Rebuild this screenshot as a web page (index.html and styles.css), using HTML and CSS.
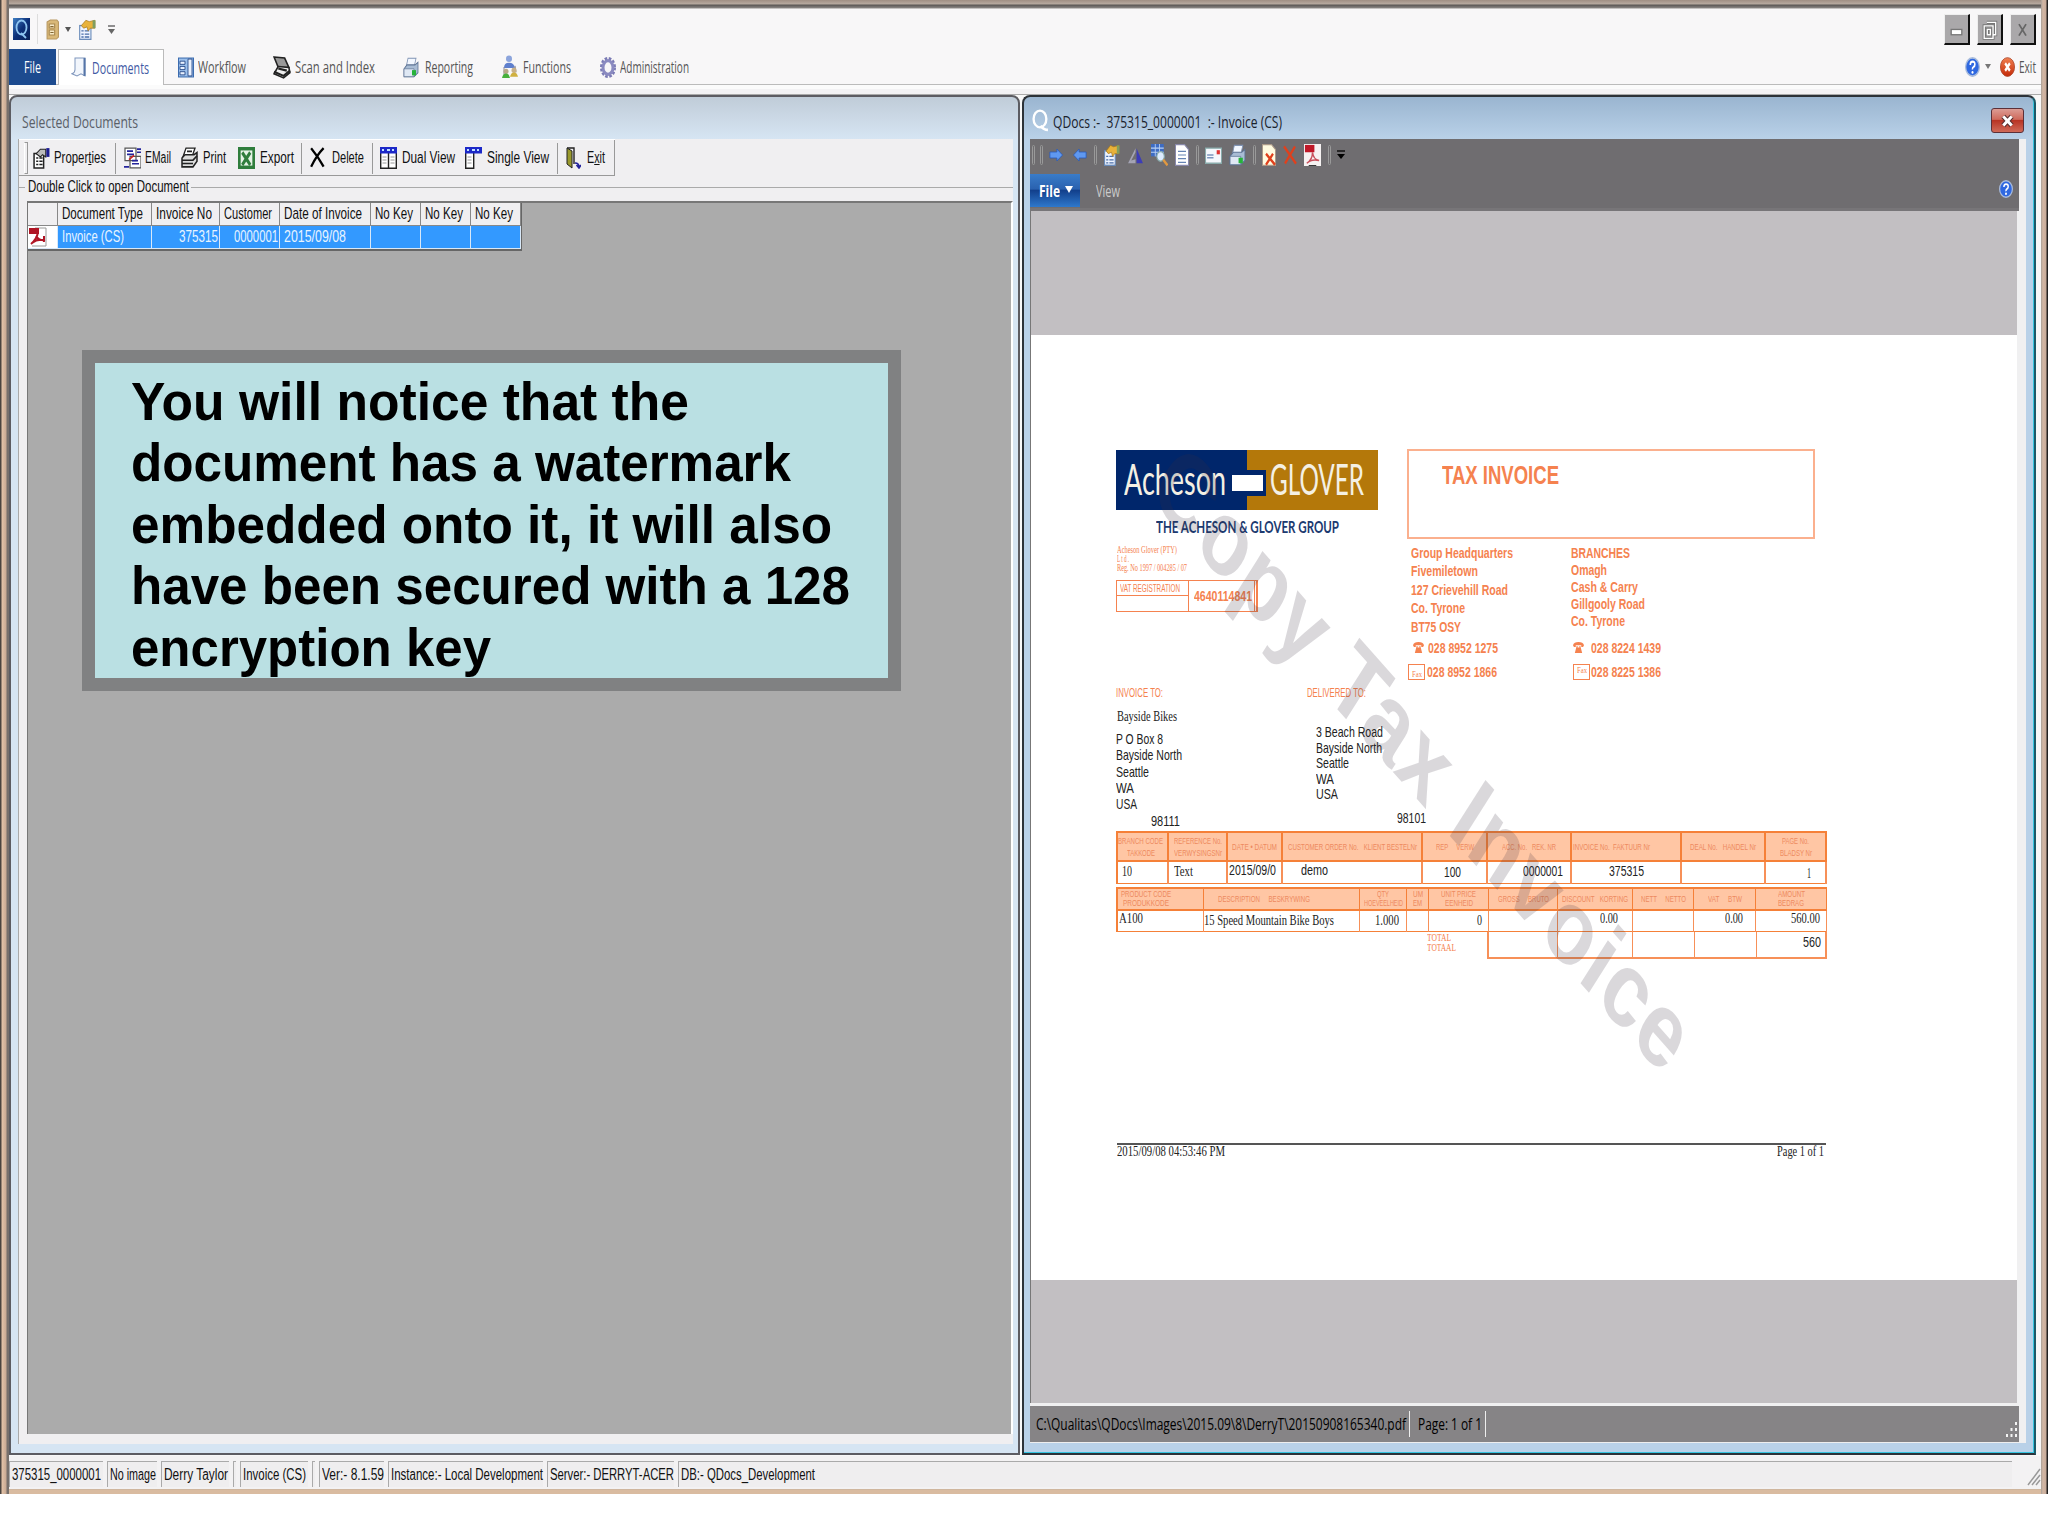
FILE: index.html
```html
<!DOCTYPE html>
<html>
	<head>
		<meta charset="utf-8">
		<title>QDocs</title>
		<link rel="stylesheet" href="styles.css">
	</head>
	<body>

		<!-- shared icons -->
		<svg class="defs" width="0" height="0">
			<defs>
				<linearGradient id="gNavy" x1="0" y1="0" x2="1" y2="1"><stop offset="0" stop-color="#3f7fc4"/><stop offset=".5" stop-color="#0c2f78"/><stop offset="1" stop-color="#0a2056"/></linearGradient>
				<linearGradient id="gRed" x1="0" y1="0" x2="0" y2="1"><stop offset="0" stop-color="#f08050"/><stop offset="1" stop-color="#c42a08"/></linearGradient>
			</defs>
			<symbol id="props" viewBox="0 0 16 16" preserveAspectRatio="none"><rect x="1.5" y="5" width="10" height="10.5" fill="#eef4ff" stroke="#6a8cba"/><path d="M3 9h2M6 9h4M3 11.5h2M6 11.5h4M3 13.7h2M6 13.7h4" stroke="#4a6ea8"/><path d="M3 5l4-4 3 1 5-1v6l-4 0-2 2-1-3-3 1z" fill="#e8b23a" stroke="#a8781c" stroke-width=".6"/><rect x="13" y="1" width="2.5" height="6" fill="#7f9e60"/></symbol>
			<symbol id="help" viewBox="0 0 16 16" preserveAspectRatio="none"><circle cx="8" cy="8" r="7.3" fill="#2f68e0" stroke="#a9bcdc" stroke-width="1.4"/><path d="M5.6 6.3q0-2.6 2.5-2.6t2.4 2.2q0 1.3-1.4 2T8 10" fill="none" stroke="#fff" stroke-width="1.7"/><circle cx="8" cy="12.3" r="1.1" fill="#fff"/></symbol>
			<symbol id="printer" viewBox="0 0 16 16" preserveAspectRatio="none"><path d="M5 1h8l-2 7H3z" fill="#f2f7ff" stroke="#8094b4" stroke-width=".8"/><path d="M1 9l3-3h8l3-2v8l-4 3H1z" fill="#a9bcd4" stroke="#5d7394" stroke-width=".8"/><path d="M1 9h10v6H1z" fill="#dfe8f4" stroke="#5d7394" stroke-width=".6"/><rect x="9" y="10" width="4" height="4" fill="#26b33a"/></symbol>
			<symbol id="excel" viewBox="0 0 16 16" preserveAspectRatio="none"><rect width="16" height="16" fill="#2f7d3c"/><rect x="2.5" y="2.5" width="11" height="11" fill="#e6f3e6"/><path d="M4 4l7.5 9M11.5 4L4 13" stroke="#2f7d3c" stroke-width="2.6"/></symbol>
			<symbol id="arrow" viewBox="0 0 16 16" preserveAspectRatio="none"><path d="M1 4h8V0l6.500 8L9 16v-4H1z" fill="#5f98f0" stroke="#2a5ab8"/></symbol>
			<symbol id="phone" viewBox="0 0 12 12" preserveAspectRatio="none"><path d="M0 4Q1 1 6 1t6 3l-1 1.5H9V4H3v1.5H1z"/><path d="M4 4.500h1V6h2V4.500h1L10 11H2z"/></symbol>
		</svg>

		<div class="app">
			<div class="quick">
				<svg class="qlogo" viewBox="0 0 17 22" preserveAspectRatio="none"><rect width="17" height="22" fill="url(#gNavy)"/><ellipse cx="8.500" cy="9.500" rx="5" ry="7" fill="none" stroke="#8ec4f0" stroke-width="1.800"/><path d="M8 15l5 5" stroke="#8ec4f0" stroke-width="1.800"/></svg>
				<i class="vline"></i>
				<svg class="cabinet" viewBox="0 0 12 21" preserveAspectRatio="none"><path d="M1 3l3-2h6l1.500 2v15l-2 2H1z" fill="#d9b878" stroke="#b89860"/><path d="M3 5h5v4H3zM3 11h5v5H3z" fill="#f8ebc8" stroke="#a88850"/><path d="M4 7.500h3M4 13.500h3" stroke="#806430"/></svg>
				<svg class="tiny" viewBox="0 0 6 5"><path d="M0 0h6L3 5z" fill="#555"/></svg>
				<svg class="prop" viewBox="0 0 16 16" preserveAspectRatio="none"><use href="#props"/></svg>
				<svg class="more" viewBox="0 0 7 9" preserveAspectRatio="none"><path d="M0 1h7" stroke="#555" stroke-width="1.300"/><path d="M0 4h7L3.500 9z" fill="#666"/></svg>
				<div class="winbtns">
					<b><svg viewBox="0 0 26 31"><rect x="7" y="16" width="12" height="6" fill="#fff" stroke="#777" stroke-width="1.500"/></svg></b>
					<b><svg viewBox="0 0 26 31"><path d="M10 8h10v14h-3M7 12h10v14H7zM10.500 16h3.500v6h-3.500z" fill="none" stroke="#777" stroke-width="3.500"/><path d="M10 8h10v14h-3M7 12h10v14H7zM10.500 16h3.500v6h-3.500z" fill="none" stroke="#fff" stroke-width="1.500"/></svg></b>
					<b><svg viewBox="0 0 26 31"><path d="M9 10l8 13M17 10L9 23" stroke="#666" stroke-width="2"/></svg></b>
				</div>
			</div>

			<div class="tabs">
				<a class="file"><span class="fit" data-w="17">File</span></a>
				<a class="on">
					<svg viewBox="0 0 16 20" preserveAspectRatio="none"><path d="M4 1h10v17l-4-2-4 2-5-2q3-1 3-4z" fill="#f2f6fc" stroke="#8097bd"/><path d="M13.500 1v17" stroke="#5575a8" stroke-width="2"/></svg>
					<span class="fit" data-w="57">Documents</span></a>
				<a>
					<svg viewBox="0 0 16 20" preserveAspectRatio="none"><rect x=".5" y="1" width="15" height="18" fill="#9cc0ec" stroke="#3c6cb0"/><path d="M2 4h5v3H2zM2 9h5v3H2zM2 14h5v3H2zM10 2h4v16h-4z" fill="#eaf2ff" stroke="#1c3f80" stroke-width=".8"/></svg>
					<span class="fit" data-w="48">Workflow</span></a>
				<a>
					<svg viewBox="0 0 17 22" preserveAspectRatio="none"><path d="M1 1l10 1 4 9H5z" fill="#999" stroke="#222" stroke-width="1.500"/><path d="M5 10l10 1 1 5-6 5-9-4z" fill="#eee" stroke="#222" stroke-width="1.500"/><path d="M1 15l9 4 6-5M5 12l8 2" stroke="#222" stroke-width="2" fill="none"/></svg>
					<span class="fit" data-w="80">Scan and Index</span></a>
				<a>
					<svg viewBox="0 0 16 16" preserveAspectRatio="none"><use href="#printer"/></svg>
					<span class="fit" data-w="48">Reporting</span></a>
				<a>
					<svg viewBox="0 0 16 22" preserveAspectRatio="none"><ellipse cx="7" cy="3.500" rx="3" ry="3" fill="#8ca4dc"/><path d="M2 12q0-5 5-5t6 5z" fill="#5f7fcd"/><path d="M2 11v7M13 10l1 6" stroke="#889"/><circle cx="4" cy="15" r="2.500" fill="#b8a888"/><path d="M0 21q1-4 4-4t4 4z" fill="#48b03c"/><circle cx="12" cy="14" r="2.500" fill="#c8b088"/><path d="M8 20q1-4 4-4t4 4z" fill="#d0b040"/></svg>
					<span class="fit" data-w="48">Functions</span></a>
				<a>
					<svg viewBox="0 0 16 20" preserveAspectRatio="none"><ellipse cx="8" cy="10" rx="6.500" ry="8.500" fill="none" stroke="#7a7ab4" stroke-width="3" stroke-dasharray="2.500 1.500"/><ellipse cx="8" cy="10" rx="5" ry="6.500" fill="none" stroke="#8a8ac0" stroke-width="3"/></svg>
					<span class="fit" data-w="69">Administration</span></a>
				<div class="right">
					<svg class="ball" viewBox="0 0 16 16" preserveAspectRatio="none"><use href="#help"/></svg>
					<svg class="tiny" viewBox="0 0 6 5"><path d="M0 0h6L3 5z" fill="#777"/></svg>
					<svg class="ball" viewBox="0 0 16 16" preserveAspectRatio="none"><circle cx="8" cy="8" r="7.500" fill="url(#gRed)" stroke="#b04a30" stroke-width=".8"/><path d="M5.500 5l5 6M10.500 5l-5 6" stroke="#fff" stroke-width="2.200"/></svg>
					<span class="fit" data-w="17">Exit</span>
				</div>
			</div>
			<div class="strip"></div>

			<div class="mdi">
				<div class="win docs">
					<div class="title"><span class="fit" data-w="116">Selected Documents</span></div>
					<div class="panel">
						<div class="toolbar">
							<i class="grip"></i>
							<a><svg viewBox="0 0 16 20" preserveAspectRatio="none"><path d="M1 6h9v13H1z" fill="#fff" stroke="#222" stroke-width="1.400"/><path d="M3 10h2M6 10h3M3 13h2M6 13h3M3 16h2M6 16h3" stroke="#222" stroke-width="1.400"/><path d="M3 6l4-4h5v7l-3-2-2 2z" fill="#bbb" stroke="#222"/><path d="M14 1v8" stroke="#1c1c90" stroke-width="3"/></svg>
							<span class="fit" data-w="52">Proper<u>t</u>ies</span></a>
							<a class="sep"><svg viewBox="0 0 17 21" preserveAspectRatio="none"><path d="M1 1h11v12H1zM6 9h11v11H6z" fill="#fff" stroke="#555" stroke-width="1.200"/><path d="M3 4h6M3 7h7M8 13h6M8 16h7M13 2h4M13 5h4M0 19h5" stroke="#24249c" stroke-width="1.600"/><path d="M5 12l5-4" stroke="#c22" stroke-width="1.600"/></svg>
							<span class="fit" data-w="26">EMail</span></a>
							<a><svg viewBox="0 0 17 20" preserveAspectRatio="none"><path d="M5 1h9l-3 8H2z" fill="#fff" stroke="#222" stroke-width="1.300"/><path d="M1 10l3-3h9l3-2v8l-4 5H1z" fill="#ddd" stroke="#222" stroke-width="1.500"/><path d="M1 12h11l4-4M1 15h11M6 4h5" stroke="#222" stroke-width="1.500" fill="none"/></svg>
							<span class="fit" data-w="23">Print</span></a>
							<a><svg viewBox="0 0 16 16" preserveAspectRatio="none"><use href="#excel"/></svg>
							<span class="fit" data-w="34">Export</span></a>
							<a class="sep"><svg viewBox="0 0 15 19" preserveAspectRatio="none"><path d="M1 1q6 7 11 16M12 1Q6 7 1 17" stroke="#000" stroke-width="2" fill="none"/></svg>
							<span class="fit" data-w="32">Delete</span></a>
							<a class="sep"><svg viewBox="0 0 17 22" preserveAspectRatio="none"><path d="M.7.7h15.600v20.600H.7zM8.500 6v15" fill="#fff" stroke="#222" stroke-width="1.400"/><rect width="17" height="6.500" fill="#1c28c8"/><path d="M2 3h2M7 3h3M12 3h2" stroke="#bfe0ff" stroke-width="2"/><path d="M2.500 10h4M2.500 13h4M2.500 16h4M10.500 10h4M10.500 13h4M10.500 16h4" stroke="#999"/></svg>
							<span class="fit" data-w="53">Dual View</span></a>
							<a><svg viewBox="0 0 17 22" preserveAspectRatio="none"><path d="M.7.7h8v20.600h-8z" fill="#fff" stroke="#222" stroke-width="1.400"/><rect width="17" height="6.500" fill="#1c28c8"/><path d="M2 3h2M7 3h3M12 3h2" stroke="#bfe0ff" stroke-width="2"/><path d="M2.500 10h4M2.500 13h4M2.500 16h4" stroke="#999"/></svg>
							<span class="fit" data-w="62">Single View</span></a>
							<a class="sep"><svg viewBox="0 0 15 22" preserveAspectRatio="none"><path d="M1 1h7v16" fill="none" stroke="#222" stroke-width="1.400"/><path d="M1 1l5 3v17l-5-4z" fill="#99992c" stroke="#222"/><path d="M9 16q4 0 4 4M10.500 18l2.500 3 2-3" stroke="#22229c" stroke-width="1.600" fill="none"/></svg>
							<span class="fit" data-w="18">E<u>x</u>it</span></a>
						</div>
						<div class="legend"><span class="fit" data-w="161">Double Click to open Document</span></div>
						<div class="list">
							<div class="grid">
								<b></b><b><span class="fit" data-w="81">Document Type</span></b><b><span class="fit" data-w="56">Invoice No</span></b><b><span class="fit" data-w="48">Customer</span></b><b><span class="fit" data-w="78">Date of Invoice</span></b><b><span class="fit" data-w="38">No Key</span></b><b><span class="fit" data-w="38">No Key</span></b><b><span class="fit" data-w="38">No Key</span></b>
								<i class="pdf"><svg viewBox="0 0 18 20" preserveAspectRatio="none"><path d="M6 1h11v18H3" fill="#fff" stroke="#999"/><rect y="1" width="10" height="6" fill="#b01525"/><path d="M2 17Q8 12 9 5M7 9q3 5 9 4M3 16q5-4 11-3M15 9v6" stroke="#b01525" stroke-width="2" fill="none"/></svg></i>
								<i><span class="fit" data-w="62">Invoice (CS)</span></i><i class="r"><span class="fit" data-w="39">375315</span></i><i class="r"><span class="fit" data-w="44">0000001</span></i><i><span class="fit" data-w="62">2015/09/08</span></i><i></i><i></i><i></i>
							</div>
						</div>
					</div>
				</div>

				<div class="win viewer">
					<div class="title">
						<svg class="q" viewBox="0 0 16 22" preserveAspectRatio="none"><ellipse cx="7.500" cy="9.500" rx="6" ry="8" fill="none" stroke="#fff" stroke-width="2.200"/><path d="M8 16q3 4 7 4" fill="none" stroke="#fff" stroke-width="2.500"/></svg>
						<span class="fit" data-w="229">QDocs :-&nbsp; 375315_0000001&nbsp; :- Invoice (CS)</span>
						<svg class="close" viewBox="0 0 33 25" preserveAspectRatio="none"><path d="M12 8l9 10M21 8l-9 10" stroke="#5a3030" stroke-width="5.500"/><path d="M12 8l9 10M21 8l-9 10" stroke="#fff" stroke-width="3.200"/></svg>
					</div>
					<div class="body">
						<div class="vbar">
							<i></i><i></i>
							<svg viewBox="0 0 16 16" preserveAspectRatio="none" class="s"><use href="#arrow"/></svg>
							<svg viewBox="0 0 16 16" preserveAspectRatio="none" class="s flip"><use href="#arrow"/></svg>
							<i></i>
							<svg viewBox="0 0 16 16" preserveAspectRatio="none"><use href="#props"/></svg>
							<svg viewBox="0 0 16 16" preserveAspectRatio="none"><path d="M1 14L8 3v3L4 12l4-1v3z" fill="#a4a4b4"/><path d="M9 14V3l6 11z" fill="#3c3cb8"/></svg>
							<svg viewBox="0 0 16 16" preserveAspectRatio="none"><path d="M0 0h12v9H0z" fill="#3d6cc4"/><path d="M0 3h12M0 6h12M4 0v9M8 0v9" stroke="#b8d0f4" stroke-width=".8"/><circle cx="9" cy="9" r="3.500" fill="#dcebff" stroke="#8aa" /><path d="M11.500 11.500l4 4" stroke="#e09840" stroke-width="2"/></svg>
							<svg class="n" viewBox="0 0 14 18" preserveAspectRatio="none"><path d="M.5.5h9l4 4v13H.5z" fill="#fff" stroke="#88a"/><path d="M3 6h8M3 9h8M3 12h8M3 15h8" stroke="#6684b4"/></svg>
							<i></i>
							<svg viewBox="0 0 16 16" preserveAspectRatio="none"><path d="M.5 3h15v11H.5z" fill="#f4f7fc" stroke="#8aa"/><path d="M2 8h6M2 10h6" stroke="#7a94bc"/><rect x="11" y="4.500" width="3" height="3" fill="#d33"/></svg>
							<svg viewBox="0 0 16 16" preserveAspectRatio="none"><use href="#printer"/></svg>
							<i></i>
							<svg class="n" viewBox="0 0 14 18" preserveAspectRatio="none"><path d="M.5.5h9l4 4v13H.5z" fill="#fffbe0" stroke="#a98"/><path d="M4 8l9 9M11 8L4 17" stroke="#e0401c" stroke-width="2.200"/></svg>
							<svg class="n" viewBox="0 0 14 18" preserveAspectRatio="none"><path d="M1 2l12 14M12 2L2 16" stroke="#e0401c" stroke-width="2.200"/></svg>
							<svg viewBox="0 0 18 24" preserveAspectRatio="none"><rect width="18" height="24" fill="#f6f2f2"/><rect x="1" y="1" width="10" height="8" fill="#c01828"/><path d="M3 21Q9 17 9 9q1 8 7 9-8-2-13 3z" stroke="#c8505c" stroke-width="1.500" fill="none"/><path d="M5 23.500h8" stroke="#222"/></svg>
							<i></i>
							<svg class="more" viewBox="0 0 7 9" preserveAspectRatio="none"><path d="M0 1h7" stroke="#000" stroke-width="1.300"/><path d="M0 4h7L3.500 9z"/></svg>
						</div>
						<div class="vtabs">
							<a class="vfile"><span class="fit" data-w="21">File</span><svg viewBox="0 0 8 7" preserveAspectRatio="none"><path d="M0 0h8L4 7z" fill="#fff"/></svg></a>
							<a><span class="fit" data-w="24">View</span></a>
							<svg class="ball" viewBox="0 0 16 16" preserveAspectRatio="none"><use href="#help"/></svg>
						</div>

						<div class="canvas">
							<div class="sheet">
								<div class="head">
									<div class="company">
										<div class="brand">
											<span class="fit" data-w="102">Acheson</span><em></em><span class="fit" data-w="94">GLOVER</span>
										</div>
										<div class="group"><span class="fit" data-w="183">THE ACHESON &amp; GLOVER GROUP</span></div>
										<div class="reg"><span class="fit" data-w="60">Acheson Glover (PTY)</span><br><span class="fit" data-w="12">L t d .</span><br><span class="fit" data-w="70">Reg. No 1997 / 004285 / 07</span></div>
										<div class="vat"><div><span class="fit" data-w="60">VAT REGISTRATION</span></div><b><span class="fit" data-w="58">4640114841</span></b></div>
									</div>
									<div class="office">
										<div class="taxbox"><span class="fit" data-w="117">TAX INVOICE</span></div>
										<div class="addr">
											<div class="hq">
												<span class="fit" data-w="102">Group Headquarters</span><span class="fit" data-w="67">Fivemiletown</span><span class="fit" data-w="97">127 Crievehill Road</span><span class="fit" data-w="54">Co. Tyrone</span><span class="fit" data-w="50">BT75 OSY</span>
											</div>
											<div class="br">
												<span class="fit" data-w="59">BRANCHES</span><span class="fit" data-w="36">Omagh</span><span class="fit" data-w="67">Cash &amp; Carry</span><span class="fit" data-w="74">Gillgooly Road</span><span class="fit" data-w="54">Co. Tyrone</span>
											</div>
											<div class="tel"><svg><use href="#phone"/></svg><span class="fit" data-w="70">028 8952 1275</span></div>
											<div class="tel"><svg><use href="#phone"/></svg><span class="fit" data-w="70">028 8224 1439</span></div>
											<div class="fax"><i><span class="fit" data-w="10">Fax</span></i><span class="fit" data-w="70">028 8952 1866</span></div>
											<div class="fax up"><i><span class="fit" data-w="10">Fax</span></i><span class="fit" data-w="70">028 8225 1386</span></div>
										</div>
									</div>
								</div>

								<div class="parties">
									<div class="to">
										<label><span class="fit" data-w="47">INVOICE TO:</span></label>
										<p class="name"><span class="fit" data-w="60">Bayside Bikes</span></p>
										<p><span class="fit" data-w="47">P O Box 8</span></p><p><span class="fit" data-w="66">Bayside North</span></p><p><span class="fit" data-w="33">Seattle</span></p><p><span class="fit" data-w="18">WA</span></p><p><span class="fit" data-w="21">USA</span></p>
										<p class="zip"><span class="fit" data-w="29">98111</span></p>
									</div>
									<div class="del">
										<label><span class="fit" data-w="59">DELIVERED TO:</span></label>
										<p><span class="fit" data-w="67">3 Beach Road</span></p><p><span class="fit" data-w="66">Bayside North</span></p><p><span class="fit" data-w="33">Seattle</span></p><p><span class="fit" data-w="18">WA</span></p><p><span class="fit" data-w="22">USA</span></p>
										<p class="zip"><span class="fit" data-w="29">98101</span></p>
									</div>
								</div>

								<div class="tbl t1">
									<b><span class="fit" data-w="45">BRANCH CODE</span><span class="fit" data-w="28">TAKKODE</span></b>
									<b><span class="fit" data-w="48">REFERENCE No.</span><span class="fit" data-w="48">VERWYSINGSNr</span></b>
									<b><span class="fit" data-w="45">DATE • DATUM</span></b>
									<b><span class="fit" data-w="129">CUSTOMER ORDER No.&nbsp;&nbsp; KLIENT BESTELNr</span></b>
									<b><span class="fit" data-w="38">REP &nbsp; &nbsp; VERW</span></b>
									<b><span class="fit" data-w="54">ACC. No. &nbsp; REK. NR</span></b>
									<b><span class="fit" data-w="77">INVOICE No. &nbsp;FAKTUUR Nr</span></b>
									<b><span class="fit" data-w="66">DEAL No. &nbsp; HANDEL Nr</span></b>
									<b><span class="fit" data-w="27">PAGE No.</span><span class="fit" data-w="32">BLADSY Nr</span></b>
									<i><span class="fit" data-w="10">10</span></i>
									<i><span class="fit" data-w="19">Text</span></i>
									<i class="sans"><span class="fit" data-w="47">2015/09/0</span></i>
									<i class="sans"><span class="fit" data-w="27">demo</span></i>
									<i class="sans"><span class="fit" data-w="17">100</span></i>
									<i class="sans"><span class="fit" data-w="40">0000001</span></i>
									<i class="sans"><span class="fit" data-w="35">375315</span></i>
									<i></i>
									<i><span class="fit" data-w="4">1</span></i>
								</div>
								<div class="tbl t2">
									<b><span class="fit" data-w="50">PRODUCT CODE</span><span class="fit" data-w="46">PRODUKKODE</span></b>
									<b><span class="fit" data-w="92">DESCRIPTION &nbsp; &nbsp; BESKRYWING</span></b>
									<b><span class="fit" data-w="12">QTY</span><span class="fit" data-w="39">HOEVEELHEID</span></b>
									<b><span class="fit" data-w="10">UM</span><span class="fit" data-w="9">EM</span></b>
									<b><span class="fit" data-w="35">UNIT PRICE</span><span class="fit" data-w="28">EENHEID</span></b>
									<b><span class="fit" data-w="51">GROSS &nbsp; &nbsp; BRUTO</span></b>
									<b><span class="fit" data-w="66">DISCOUNT &nbsp; KORTING</span></b>
									<b><span class="fit" data-w="45">NETT &nbsp; &nbsp; NETTO</span></b>
									<b><span class="fit" data-w="34">VAT &nbsp; &nbsp; BTW</span></b>
									<b><span class="fit" data-w="27">AMOUNT</span><span class="fit" data-w="26">BEDRAG</span></b>
									<i><span class="fit" data-w="24">A100</span></i>
									<i><span class="fit" data-w="130">15 Speed Mountain Bike Boys</span></i>
									<i><span class="fit" data-w="24">1.000</span></i>
									<i></i>
									<i><span class="fit" data-w="5">0</span></i>
									<i></i>
									<i><span class="fit" data-w="18">0.00</span></i>
									<i></i>
									<i><span class="fit" data-w="18">0.00</span></i>
									<i><span class="fit" data-w="29">560.00</span></i>
								</div>
								<div class="totals">
									<div class="tot"><span class="fit" data-w="24">TOTAL</span><br><span class="fit" data-w="29">TOTAAL</span></div>
									<i></i><i></i><i></i><i></i><i class="sans"><span class="fit" data-w="18">560</span></i>
								</div>

								<div class="foot"><span class="fit" data-w="108">2015/09/08 04:53:46 PM</span><span class="fit" data-w="47">Page 1 of 1</span></div>

								<svg class="watermark" viewBox="0 0 986 945">
									<text transform="translate(116 160) scale(.75 1) rotate(40.2)">Copy Tax Invoice</text>
								</svg>
							</div>
						</div>

						<div class="vstatus">
							<span class="fit" data-w="370">C:\Qualitas\QDocs\Images\2015.09\8\DerryT\20150908165340.pdf</span><i></i><span class="fit" data-w="64">Page: 1 of 1</span><i></i>
							<svg viewBox="0 0 12 16"><path d="M9 0h2v3H9zM9 6h2v3H9zM9 12h2v3H9zM4.500 6h2v3h-2zM4.500 12h2v3h-2zM0 12h2v3H0z" fill="#f4f4f4"/></svg>
						</div>
					</div>
				</div>
			</div>

			<div class="status">
				<span><span class="fit" data-w="89">375315_0000001</span></span>
				<span><span class="fit" data-w="46">No image</span></span>
				<span><span class="fit" data-w="64">Derry Taylor</span></span>
				<span></span>
				<span><span class="fit" data-w="63">Invoice (CS)</span></span>
				<span></span>
				<span><span class="fit" data-w="62">Ver:- 8.1.59</span></span>
				<span><span class="fit" data-w="152">Instance:- Local Development</span></span>
				<span><span class="fit" data-w="124">Server:- DERRYT-ACER</span></span>
				<span><span class="fit" data-w="134">DB:- QDocs_Development</span></span>
				<svg viewBox="0 0 14 20" preserveAspectRatio="none"><path d="M1 18L13 2M5 18l8-10M9 18l4-5" stroke="#999" stroke-width="1.500"/></svg>
			</div>
		</div>

		<div class="callout">
			<span class="fit" data-w="558">You will notice that the</span>
			<span class="fit" data-w="660">document has a watermark</span>
			<span class="fit" data-w="701">embedded onto it, it will also</span>
			<span class="fit" data-w="719">have been secured with a 128</span>
			<span class="fit" data-w="360">encryption key</span>
		</div>

		<script src="fit.js"></script>
	</body>
</html>
```
FILE: styles.css
```css
* {
	box-sizing: border-box;
}
body {
	margin: 0;
	background: #fff;
	font-family: "Liberation Sans", Arial, sans-serif;
	font-size: 16px;
	color: #111;
}
i, em { font-style: normal; }
b { font-weight: normal; }
svg { display: block; flex: none; }
.defs { position: absolute; }
.fit {
	display: inline-block;
	white-space: pre;
	transform-origin: 0 50%;
	flex: none;
}

.app {
	width: 2048px;
	height: 1494px;
	padding: 9px 7px 5px 9px;
	display: flex;
	flex-direction: column;
	background: linear-gradient(90deg, #4a4440 0, #4a4440 1px, #e3c3a8 2px, #c9aa94 6px, #77706c 7px, #77706c 9px, transparent 9px, transparent 2041px, #a8a098 2041px, #d3b7a4 2043px, #c7ab9a 2046px, #222 2047px),
		linear-gradient(#a08f84 0, #b7aaa0 4px, #5a5654 5px, #8a8684 8px, #fff 9px, #fff 1488px, #b0a898 1488px, #d9bba0 1490px);
}

/* quick access + ribbon */
.quick {
	height: 40px;
	flex: none;
	display: flex;
	align-items: center;
	padding: 0 0 0 4px;
	background: #f8f7f8;
}
.tiny { width: 6px; height: 5px; }
.qlogo { width: 17px; height: 22px; }
.vline { width: 1px; height: 30px; background: #ddd; margin: 0 8px 0 7px; }
.cabinet { width: 13px; height: 21px; margin-right: 6px; }
.prop { width: 18px; height: 21px; margin: 0 12px 0 7px; }
.quick .more { width: 7px; height: 9px; }
.winbtns {
	display: flex;
	gap: 7px;
	margin-left: auto;
	padding-right: 5px;
}
.winbtns b {
	width: 26px;
	height: 31px;
	background: #aaa8aa;
	border: 1px solid #eee;
	border-right: 2px solid #111;
	border-bottom: 2px solid #111;
}
.winbtns svg { width: 23px; height: 28px; }

.tabs {
	height: 36px;
	flex: none;
	display: flex;
	font-family: "Open Sans", sans-serif;
	color: #555;
	background: #f8f7f8;
	border-bottom: 1px solid #bbb;
}
.tabs a {
	display: flex;
	align-items: center;
	gap: 6px;
	height: 36px;
}
.tabs a svg { width: 16px; height: 21px; }
.tabs a.file {
	width: 47px;
	padding-left: 15px;
	background: #1d4b8f;
	color: #fff;
}
.tabs a.on {
	width: 106px;
	margin-left: 2px;
	padding-left: 12px;
	gap: 5px;
	background: #fff;
	border: 1px solid #bbb;
	border-bottom: 0;
	color: #3f5aa4;
}
.tabs a:nth-child(3) { padding-left: 14px; width: 109px; gap: 4px; }
.tabs a:nth-child(4) { width: 130px; gap: 4px; }
.tabs a:nth-child(4) svg { width: 18px; height: 23px; }
.tabs a:nth-child(5) { width: 99px; }
.tabs a:nth-child(6) { width: 98px; gap: 5px; }
.tabs a:nth-child(6) svg { height: 24px; }
.tabs a:nth-child(7) { gap: 4px; }
.tabs .right {
	margin-left: auto;
	padding-right: 5px;
	display: flex;
	align-items: center;
	gap: 4px;
}
.ball { width: 15px; height: 20px; }
.tabs .right .tiny { margin-right: 5px; margin-left: 1px; }
.strip {
	height: 10px;
	flex: none;
	background: #f3f2f4;
	border-top: 4px solid #fbfbfb;
	border-bottom: 1px solid #aaa;
}

/* child windows */
.mdi {
	height: 1361px;
	flex: none;
	display: flex;
	gap: 2px;
	background: #f8f8f8;
}
.win {
	height: 1360px;
	display: flex;
	flex-direction: column;
	border: 2px solid #5c5c62;
	border-radius: 8px 8px 0 0;
}
.title {
	height: 42px;
	flex: none;
	display: flex;
	align-items: center;
	font-family: "Open Sans", sans-serif;
}
.docs {
	width: 1011px;
	padding: 0 5px 9px 7px;
	background: linear-gradient(#c0ccd8 0, #d6e5f3 42px, #d6e5f3 100%);
}
.docs .title { color: #5a6068; padding: 8px 0 0 4px; }
.panel {
	flex: 1;
	background: #f0eff1;
	border-left: 1px solid #aaa;
}
.toolbar {
	width: 596px;
	height: 37px;
	display: flex;
	align-items: center;
	border-top: 1px solid #fff;
	box-shadow: inset -1px -1px #999;
}
.toolbar a { display: flex; align-items: center; gap: 5px; height: 31px; }
.toolbar svg { width: 17px; height: 22px; }
.toolbar .grip { width: 4px; height: 32px; margin: 0 5px 0 5px; border: 1px solid #999; border-left-color: #fff; }
.toolbar a.sep { border-left: 1px solid #999; }
.toolbar a:nth-child(2) { width: 82px; gap: 4px; }
.toolbar a:nth-child(3) { width: 66px; padding-left: 8px; gap: 4px; }
.toolbar a:nth-child(4) { width: 57px; }
.toolbar a:nth-child(5) { width: 63px; }
.toolbar a:nth-child(6) { width: 71px; padding-left: 8px; }
.toolbar a:nth-child(7) { width: 93px; padding-left: 7px; gap: 5px; }
.toolbar a:nth-child(8) { width: 92px; gap: 5px; }
.toolbar a:nth-child(9) { padding-left: 8px; gap: 6px; }
.toolbar a:nth-child(9) svg { width: 15px; }
.legend {
	display: flex;
	align-items: center;
	height: 22px;
	font-size: 17px;
}
.legend:before { content: ""; width: 6px; margin-right: 3px; border-top: 1px solid #aaa; }
.legend:after { content: ""; flex: 1; margin-left: 2px; border-top: 1px solid #aaa; }
.list {
	height: 1233px;
	margin: 3px 0 0 8px;
	background: #ababab;
	border: solid #777;
	border-width: 2px 0 0 1px;
	border-right: 2px solid #fff;
}
.grid {
	width: 494px;
	display: grid;
	grid-template-columns: 30px 94px 68px 60px 91px 50px 50px 50px;
	grid-template-rows: 23px 23px;
	font-size: 17px;
	border: solid #666;
	border-width: 0 1px 2px 0;
}
.grid b, .grid i {
	display: flex;
	align-items: center;
	padding: 0 2px 0 4px;
	background: #f0eff1;
	border: solid #888;
	border-width: 0 1px 1px 0;
}
.grid i { background: #3399ff; color: #e8f4ff; border-color: #d8e8f8; }
.grid i.pdf { background: #fff; padding: 0 0 0 1px; }
.pdf svg { width: 18px; height: 20px; }
.grid .r { justify-content: flex-end; padding-right: 1px; }

.viewer {
	width: 1014px;
	border-color: #2c3238;
	border-right-color: #1b5a68;
	box-shadow: inset -1px -1px #35c4e0;
	padding: 0 8px 10px 6px;
	background: linear-gradient(#9ab5d0 0, #b9d1e8 42px, #b9d1e8 100%);
}
.viewer .title { color: #1a222c; padding: 0 2px 0 2px; }
.viewer .q { width: 17px; height: 23px; margin: 4px 4px 0 0; }
.viewer .title .fit { margin-top: 7px; }
.close {
	width: 33px;
	height: 25px;
	margin: 5px 0 0 auto;
	border: 1px solid #5c3038;
	border-radius: 3px;
	background: linear-gradient(#dc9c94 0, #cf6a5c 45%, #b83424 50%, #d06a58 100%);
}
.body {
	flex: 1;
	display: flex;
	flex-direction: column;
	background: #f0f0f1;
	padding-right: 7px;
}
.vbar {
	height: 35px;
	flex: none;
	display: flex;
	align-items: center;
	background: #6f6d70;
	padding: 0 2px 4px;
	gap: 7px;
}
.vbar i { width: 3px; height: 20px; border: 1px solid #999; border-radius: 2px; margin-right: -1px; }
.vbar svg { width: 17px; height: 22px; }
.vbar i + i { margin-left: -1px; }
.vbar .n { width: 14px; }
.vbar .s { width: 14px; height: 12px; margin-right: 3px; }
.vbar .flip { transform: scaleX(-1); margin-right: 0; }
.vbar .more { width: 8px; height: 9px; }
.vtabs {
	height: 37px;
	flex: none;
	display: flex;
	background: #6f6d70;
	border-bottom: 3px solid #777578;
	font-family: "Open Sans", sans-serif;
	color: #ccc;
}
.vtabs a { display: flex; align-items: center; height: 34px; padding-left: 16px; }
.vtabs .vfile {
	width: 50px;
	height: 33px;
	padding-left: 9px;
	gap: 5px;
	color: #fff;
	font-weight: bold;
	background: linear-gradient(#3a7cc8 0, #2a62b0 45%, #12408c 50%, #2e78cc 100%);
}
.vfile svg { width: 8px; height: 7px; margin-top: -3px; }
.vtabs .ball { width: 14px; height: 18px; margin: 6px 6px 0 auto; }
.canvas {
	height: 1192px;
	flex: none;
	padding-top: 124px;
	margin-right: 2px;
	background: #c2bfc2;
	border-left: 1px solid #777;
}
.vstatus {
	height: 37px;
	display: flex;
	align-items: center;
	padding-left: 6px;
	margin-top: 3px;
	background: #868486;
	font-family: "Open Sans", sans-serif;
	color: #000;
	border-bottom: 1px solid #eee;
}
.vstatus i { width: 1px; height: 26px; background: #eee; margin: 0 8px 0 3px; }
.vstatus svg { width: 12px; height: 16px; margin: 12px 1px 0 auto; }

/* invoice */
.sheet {
	position: relative;
	width: 986px;
	height: 945px;
	padding: 114px 0 0 85px;
	background: #fff;
	color: #222;
}
.head {
	height: 237px;
	display: grid;
	grid-template-columns: 291px 408px;
	color: #f5824f;
}
.brand {
	width: 262px;
	height: 60px;
	margin-top: 1px;
	padding-left: 8px;
	display: flex;
	align-items: center;
	background: linear-gradient(90deg, #00266b 131px, #b4780a 131px);
	font-family: Lato, sans-serif;
	font-size: 42px;
	line-height: 60px;
	color: #f4f0e4;
}
.brand .fit { margin-top: -2px; }
.brand em {
	width: 37px;
	height: 26px;
	margin: 6px 4px 0 3px;
	background: #fff;
	border: 5px solid #00266b;
	border-width: 5px 3px 5px 3px;
}
.group {
	height: 30px;
	padding: 6px 0 0 40px;
	font: bold 17px/22px Lato, sans-serif;
	color: #1c3a70;
}
.reg {
	padding: 5px 0 0 1px;
	height: 40px;
	font: 10px/9px "Liberation Serif", serif;
}
.vat {
	width: 142px;
	height: 32px;
	display: grid;
	grid-template-columns: 71px 67px;
	border: 1px solid #f5824f;
	border-right-width: 2px;
	font-size: 10px;
}
.vat div { height: 15px; padding: 2px 0 0 3px; line-height: 11px; border-bottom: 1px solid #f5824f; }
.vat b { border: solid #f5824f; border-width: 0 1px; padding-left: 5px; font: bold 15px/30px "Liberation Sans", sans-serif; }
.taxbox {
	height: 90px;
	padding: 9px 0 0 33px;
	border: 2px solid #fbb08e;
	font: bold 26px/30px "Liberation Sans", sans-serif;
}
.addr {
	display: grid;
	grid-template-columns: 160px 200px;
	grid-template-rows: 91px 25px 23px;
	padding-top: 5px;
	font-weight: bold;
	font-size: 15px;
}
.hq, .br { display: flex; flex-direction: column; align-items: flex-start; padding-left: 4px; line-height: 18.4px; }
.br { line-height: 17px; }
.tel, .fax { display: flex; align-items: center; }
.tel svg { width: 11px; height: 13px; margin: 0 4px 0 6px; fill: #f5824f; }
.tel:nth-child(4) svg { margin-right: 7px; }
.fax i {
	width: 17px;
	height: 16px;
	margin: 0 2px 0 1px;
	padding: 5px 0 0 3px;
	font: 8px/9px "Liberation Serif", serif;
	border: 1px solid #f5824f;
}
.fax.up i { margin-left: 6px; padding-top: 1px; margin-right: 1px; }
.parties {
	height: 145px;
	display: grid;
	grid-template-columns: 191px 200px;
	font-size: 15px;
}
.parties label { display: block; height: 19px; padding-top: 1px; font-size: 12px; line-height: 12px; color: #f5824f; }
.parties p { margin: 0; line-height: 16.3px; height: 16.3px; }
.parties .name { font: 15px/22px "Liberation Serif", serif; height: 24px; margin-bottom: 2px; padding-left: 1px; }
.to .zip { padding: 1px 0 0 35px; }
.parties .del label { height: 38px; }
.parties .del p { line-height: 15.5px; height: 15.5px; padding-left: 9px; }
.parties .del .zip { padding: 8px 0 0 90px; }

.tbl {
	width: 711px;
	display: grid;
	border: solid #f58038;
	border-width: 2px 0 1px 2px;
	font: 15px/18px "Liberation Serif", serif;
}
.tbl b {
	display: flex;
	flex-direction: column;
	align-items: center;
	justify-content: center;
	background: #ffc6a4;
	border: solid #f58038;
	border-width: 0 2px 2px 0;
	font: 9px/11px "Liberation Sans", sans-serif;
	color: #ee8a60;
}
.tbl i { border-right: 2px solid #f79058; }
.tbl .fit, .totals .fit { vertical-align: top; }
.sans { font-family: "Liberation Sans", sans-serif; }
.t1 { grid-template: 29px 22px / 51px 59px 55px 140px 65px 84px 110px 84px 61px; height: 53px; }
.t1 i:nth-of-type(1) { padding-left: 4px; }
.t1 i:nth-of-type(2) { padding-left: 5px; }
.t1 i:nth-of-type(3) { padding-left: 1px; line-height: 16px; }
.t1 i:nth-of-type(4) { padding-left: 18px; line-height: 16px; }
.t1 i:nth-of-type(5) { padding-left: 21px; line-height: 20px; }
.t1 i:nth-of-type(6) { padding-left: 35px; }
.t1 i:nth-of-type(7) { padding-left: 37px; }
.t1 i:nth-of-type(9) { padding: 2px 0 0 41px; }
.t1 b { line-height: 12px; }
.t2 { grid-template: 22px 21px / 86px 156px 47px 22px 60px 69px 75px 61px 62px 71px; height: 45px; margin-top: 3px; }
.t2 b { line-height: 9px; border-right-width: 1px; }
.t2 i { border-right-width: 1px; text-align: right; }
.t2 b:first-child { padding-right: 30px; }
.t2 b:nth-child(2) { padding-right: 36px; }
.t1 b:first-child { padding-right: 4px; }
.t1 b:nth-of-type(7) { padding-right: 30px; }
.t2 i:nth-of-type(1) { text-align: left; padding-left: 1px; line-height: 14px; }
.t2 i:nth-of-type(2) { text-align: left; }
.t2 i:nth-of-type(3) { padding-right: 7px; }
.t2 i:nth-of-type(5) { padding-right: 6px; }
.t2 i:nth-of-type(7) { padding-right: 14px; line-height: 15px; }
.t2 i:nth-of-type(9) { padding-right: 12px; line-height: 15px; }
.t2 i:nth-of-type(10) { padding-right: 6px; line-height: 15px; }
.totals {
	width: 711px;
	height: 27px;
	display: grid;
	grid-template-columns: 371px 70px 75px 62px 62px 71px;
	font-size: 15px;
}
.totals i { border: solid #f79058; border-width: 0 0 2px 1px; text-align: right; line-height: 19px; padding-right: 4px; }
.totals i:last-child { border-right-width: 2px; }
.totals i:nth-child(2) { border-left-width: 2px; }
.tot { padding: 0 0 0 311px; font: 11px/10px "Liberation Serif", serif; color: #f5824f; }
.foot {
	width: 709px;
	margin: 184px 0 0 1px;
	padding-right: 2px;
	display: flex;
	justify-content: space-between;
	border-top: 2px solid #555;
	font: 14px/13px "Liberation Serif", serif;
}
.watermark {
	position: absolute;
	left: 0;
	top: 0;
	width: 986px;
	height: 945px;
}
.watermark text {
	font: bold 107px "Liberation Sans", sans-serif;
	letter-spacing: 2px;
	fill: rgba(60, 50, 65, .19);
}

.status {
	height: 33px;
	flex: none;
	display: grid;
	grid-template-columns: 94px 50px 68px 3px 68px 3px 65px 155px 127px 1fr 25px;
	column-gap: 4px;
	padding: 5px 0 2px 0;
	background: #f3f2f3;
}
.status > span {
	display: flex;
	align-items: center;
	min-width: 0;
	padding-left: 2px;
	background: #efeeef;
	border: solid #aaa;
	border-width: 1px 0 0 1px;
}
.status svg { width: 14px; height: 20px; align-self: end; justify-self: end; }

/* floating note over the workspace */
.callout {
	position: absolute;
	left: 82px;
	top: 350px;
	width: 819px;
	height: 341px;
	padding: 8px 0 0 36px;
	display: flex;
	flex-direction: column;
	align-items: flex-start;
	background: #bae0e3;
	border: 13px solid #808182;
	font: bold 54px/61.4px "Liberation Sans", Arial, sans-serif;
	color: #000;
}
```
FILE: fit.js
```js
// squeeze each label to the width given in data-w
var labels = document.querySelectorAll('.fit');

for (var i = 0; i < labels.length; i++) {
	var el = labels[i];
	var want = parseFloat(el.getAttribute('data-w'));
	var have = el.getBoundingClientRect().width;
	el.style.transform = 'scaleX(' + want / have + ')';
	el.style.marginRight = (want - have) + 'px';
}
```
